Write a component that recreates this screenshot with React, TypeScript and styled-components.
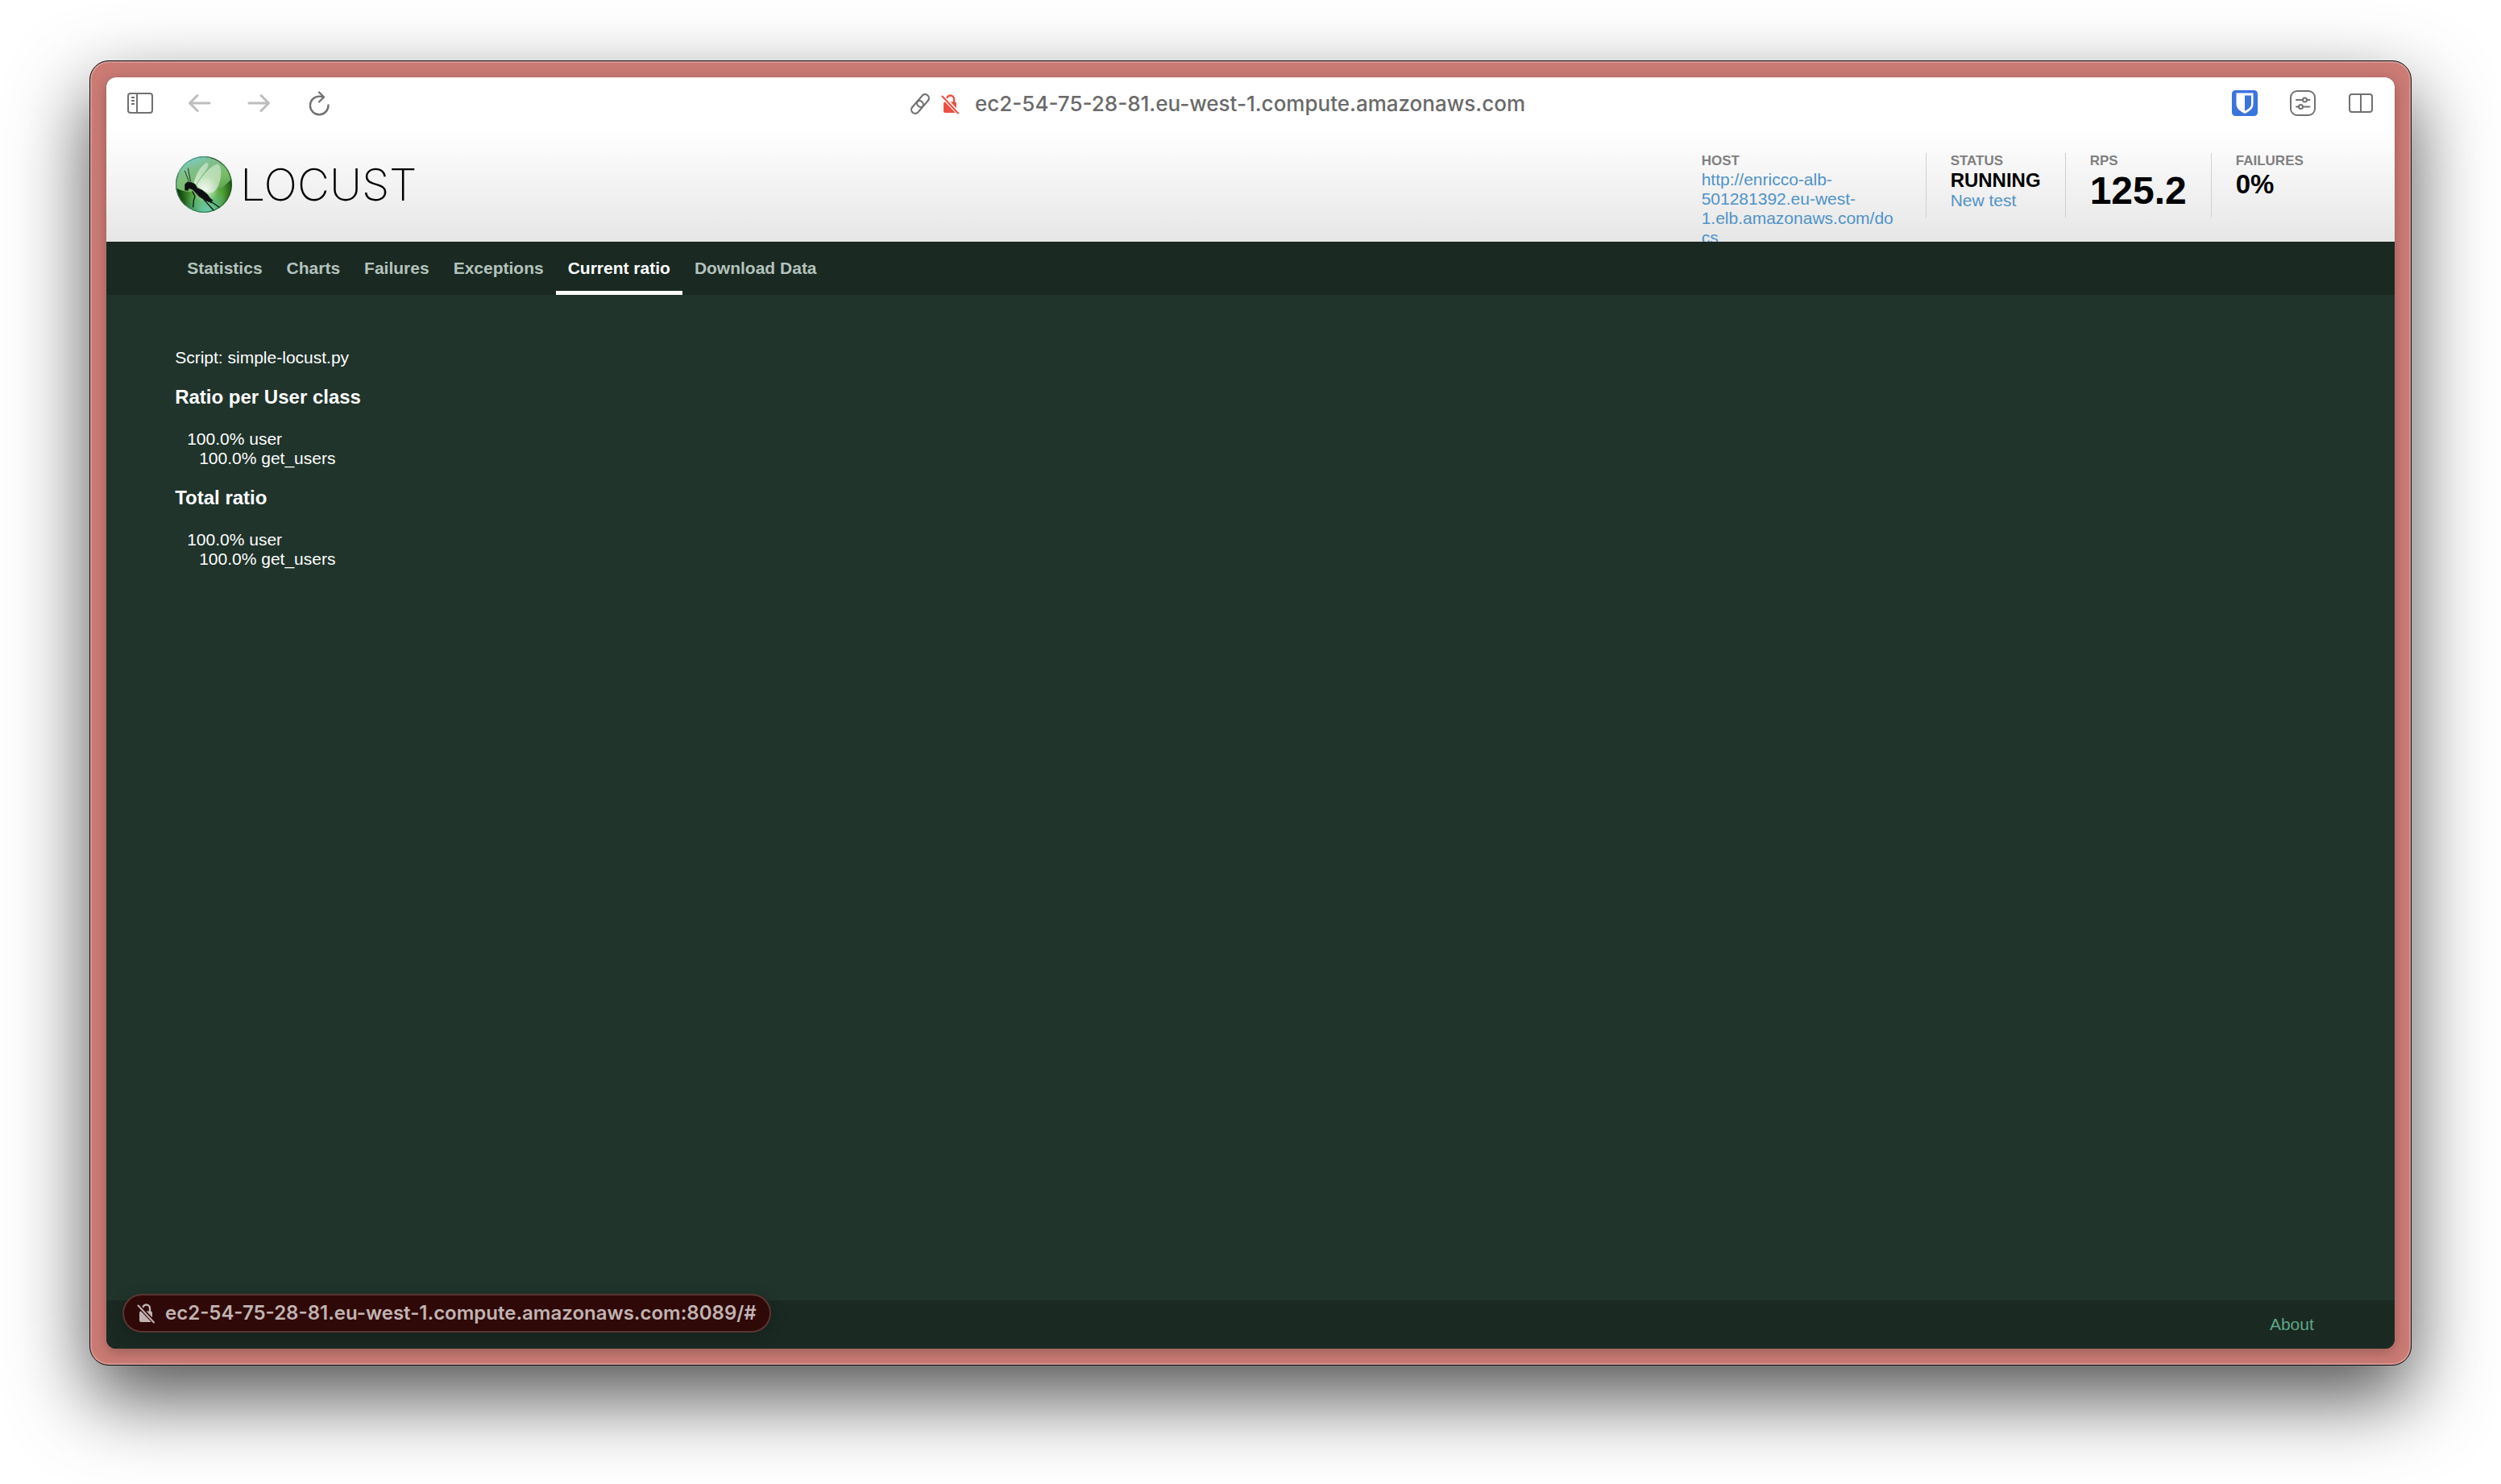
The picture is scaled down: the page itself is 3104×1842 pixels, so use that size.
import React from "react";
import styled, { createGlobalStyle, css } from "styled-components";

const color = {
  page: "#20342b",
  bar: "#1a2922",
  frame: "#cb7a74",
  icon: "#717171",
  iconDim: "#bdbdbd",
  link: "#4f93c8",
};

const GlobalStyle = createGlobalStyle`
  *, *::before, *::after { box-sizing: border-box; }
  body {
    margin: 0;
    background: #ffffff;
    font-family: "Liberation Sans", Arial, sans-serif;
    font-size: 21px;
    line-height: 24px;
  }
`;

const Desktop = styled.div`
  display: flex;
  min-height: 100vh;
  padding: 75px 111px 147px;
`;

const Frame = styled.div`
  display: flex;
  flex: 1;
  padding: 20px;
  border: 1px solid #101010;
  border-radius: 24px;
  background: ${color.frame};
  box-shadow: inset 0 0 0 2px rgba(255, 255, 255, 0.22), 0 40px 96px rgba(0, 0, 0, 0.68);
`;

const Window = styled.div`
  position: relative;
  display: flex;
  flex: 1;
  flex-direction: column;
  min-width: 0;
  border-radius: 12px;
  background: ${color.page};
  box-shadow: 0 4px 16px rgba(0, 0, 0, 0.25);
`;

const Toolbar = styled.div`
  display: flex;
  align-items: center;
  height: 64px;
  padding: 0 26px 0 25px;
  border-radius: 12px 12px 0 0;
  background: #ffffff;
`;

const ToolGroup = styled.div`
  display: flex;
  align-items: center;
  gap: 40px;
`;

const IconButton = styled.button`
  display: flex;
  padding: 0;
  border: 0;
  background: none;
  color: ${(p: { $dim?: boolean }) => (p.$dim ? color.iconDim : color.icon)};
`;

const AddressArea = styled.div`
  display: flex;
  flex: 1;
  justify-content: center;
  padding-right: 162px;
`;

const Address = styled.button`
  display: flex;
  align-items: center;
  gap: 12px;
  padding: 2px 0 0;
  border: 0;
  background: none;
  color: #6a6a6a;
  font: 500 26px/32px Inter, sans-serif;
`;

const AddressText = styled.span`
  padding-left: 8px;
`;

const inset = css`
  padding: 0 3%;
`;

const Header = styled.header`
  ${inset}
  display: flex;
  justify-content: space-between;
  height: 140px;
  background: linear-gradient(#ffffff, #e6e6e6);
`;

const Brand = styled.a`
  display: flex;
  align-items: center;
  gap: 10px;
  height: 70px;
  margin: 34px 0 0 1px;
  color: #000000;
  font: 200 55px/70px Inter, sans-serif;
  text-decoration: none;
`;

const Stats = styled.div`
  display: flex;
  align-items: flex-start;
  padding-top: 30px;
`;

const Stat = styled.div`
  height: 80px;
  padding: 0 30px;
  border-left: 1px solid #cfcfcf;

  &:first-child { border-left: 0; }
  &:last-child { padding-right: 28px; }
`;

const StatLabel = styled.div`
  padding: 1px 0 2px;
  color: #808080;
  font-size: 17px;
  font-weight: bold;
  line-height: 18px;
`;

const StatValue = styled.div<{ $size: number; $line: number }>`
  color: #000000;
  font-size: ${(p) => p.$size}px;
  font-weight: bold;
  line-height: ${(p) => p.$line}px;
`;

const StatLink = styled.a`
  display: block;
  max-width: 248px;
  color: ${color.link};
  text-decoration: none;
  overflow-wrap: anywhere;
`;

const Nav = styled.nav`
  ${inset}
  position: relative;
  display: flex;
  height: 66px;
  background: ${color.bar};
`;

const Tab = styled.a<{ $active?: boolean }>`
  padding: 21px 15px 16px;
  border-bottom: 5px solid ${(p) => (p.$active ? "#ffffff" : "transparent")};
  color: ${(p) => (p.$active ? "#ffffff" : "#b3c3bc")};
  font-weight: bold;
  text-decoration: none;
`;

const Main = styled.main`
  flex: 1;
  padding: 66px 3% 0;
  color: #ffffff;
`;

const ScriptName = styled.p`
  margin: 0;
`;

const RatioTitle = styled.h3`
  margin: 23px 0 26px;
  font-size: 24px;
  line-height: 28px;
`;

const RatioList = styled.ul`
  margin: 0;
  padding: 0 0 0 15px;
  list-style: none;
`;

const Footer = styled.footer`
  ${inset}
  display: flex;
  align-items: center;
  justify-content: flex-end;
  height: 60px;
  border-radius: 0 0 12px 12px;
  background: ${color.bar};
`;

const FooterLink = styled.a`
  padding: 0 15px;
  color: #5fa587;
  text-decoration: none;
`;

const StatusPill = styled.div`
  position: absolute;
  bottom: 20px;
  left: 20px;
  display: flex;
  align-items: center;
  gap: 13px;
  height: 48px;
  padding: 0 16px;
  border: 2px solid #5b3533;
  border-radius: 24px;
  background: #2f0907;
  box-shadow: 0 4px 20px rgba(0, 0, 0, 0.2);
  color: #c1b3b2;
  font: 600 24px/32px Inter, sans-serif;
`;

const SidebarIcon = () => (
  <svg width="34" height="28" viewBox="0 0 34 28" fill="none" stroke="currentColor" strokeWidth="2">
    <rect x="2" y="2" width="30" height="24" rx="3" />
    <path d="M13 2v24M6 7h4M6 11h4M6 15h4" />
  </svg>
);

const BackIcon = () => (
  <svg width="34" height="28" viewBox="0 0 34 28" fill="none" stroke="currentColor" strokeWidth="3" strokeLinecap="round" strokeLinejoin="round">
    <path d="M29 14H5M14 4.500L4.500 14l9.500 9.500" />
  </svg>
);

const ForwardIcon = () => (
  <svg width="34" height="28" viewBox="0 0 34 28" fill="none" stroke="currentColor" strokeWidth="3" strokeLinecap="round" strokeLinejoin="round">
    <path d="M4 14h24M19 4.500L28.500 14 19 23.500" />
  </svg>
);

const ReloadIcon = () => (
  <svg width="34" height="34" viewBox="0 0 34 34" fill="none" stroke="currentColor" strokeWidth="2.400" strokeLinecap="round" strokeLinejoin="round">
    <path d="M28.500 19.500A11.300 11.300 0 1 1 17.200 8.600c2 0 4 .2 5.400.8" />
    <path d="M17 3.500l6 6-6 6" />
  </svg>
);

const LinkIcon = () => (
  <svg width="28" height="28" viewBox="0 0 28 28" fill="none" stroke="#717171" strokeWidth="2.200">
    <rect x="8.700" y="5.250" width="17.600" height="9.500" rx="4.750" transform="rotate(-50 17.500 10)" />
    <rect x="1.700" y="13.250" width="17.600" height="9.500" rx="4.750" transform="rotate(-50 10.500 18)" />
  </svg>
);

const InsecureIcon = ({ gap, fill }: { gap: string; fill: string }) => (
  <svg width="22" height="26" viewBox="0 0 22 26" fill="none">
    <path d="M7 12V7a4.500 4.500 0 0 1 9 0V12" stroke={fill} strokeWidth="2.400" />
    <rect x="3" y="10.500" width="16" height="13.500" rx="2" fill={fill} />
    <path d="M1 2.700L22 25" stroke={gap} strokeWidth="4.800" />
    <path d="M1.500 3.500L21 24.500" stroke={fill} strokeWidth="2" strokeLinecap="round" />
  </svg>
);

const ShieldIcon = () => (
  <svg width="32" height="32" viewBox="0 0 32 32">
    <rect width="32" height="32" rx="4.500" fill="#3a74dd" />
    <path d="M5.500 3.500h21v14c0 5-5 9-10.500 11.500C10.500 26.500 5.500 22.500 5.500 17.500z" fill="#ffffff" />
    <path d="M16 6.500h8v11c0 3.500-3.500 6-8 8.200z" fill="#3a74dd" />
  </svg>
);

const SlidersIcon = () => (
  <svg width="32" height="32" viewBox="0 0 32 32" fill="none" stroke="currentColor" strokeWidth="2">
    <rect x="1" y="1" width="30" height="30" rx="8" />
    <path d="M8 12h8M21 12h3.500M8 20.500h3M16.500 20.500h8" strokeLinecap="round" />
    <circle cx="18.500" cy="12" r="2.500" />
    <circle cx="13.500" cy="20.500" r="2.500" />
  </svg>
);

const SplitIcon = () => (
  <svg width="32" height="26" viewBox="0 0 32 26" fill="none" stroke="currentColor" strokeWidth="2">
    <rect x="2" y="2" width="28" height="22" rx="3" />
    <path d="M16 2v22" />
  </svg>
);

const LocustOrb = () => (
  <svg width="70" height="70" viewBox="0 0 210 210">
    <defs>
      <clipPath id="orb"><circle cx="105" cy="105" r="105" /></clipPath>
      <linearGradient id="upper" x1="0.100" y1="0" x2="0.700" y2="1">
        <stop offset="0" stopColor="#7cd3e0" />
        <stop offset="0.350" stopColor="#80bf8c" />
        <stop offset="0.700" stopColor="#79bd68" />
        <stop offset="1" stopColor="#5ea453" />
      </linearGradient>
      <radialGradient id="lower" cx="0.560" cy="0.640" r="0.520">
        <stop offset="0" stopColor="#84c95c" />
        <stop offset="0.550" stopColor="#4c9a33" />
        <stop offset="1" stopColor="#0b3a08" />
      </radialGradient>
      <radialGradient id="pool" cx="0.550" cy="1" r="0.450">
        <stop offset="0" stopColor="#6fd0b8" />
        <stop offset="1" stopColor="#6fd0b8" stopOpacity="0" />
      </radialGradient>
      <radialGradient id="glow" cx="0.520" cy="0.580" r="0.240">
        <stop offset="0" stopColor="#ffffff" stopOpacity="0.750" />
        <stop offset="1" stopColor="#ffffff" stopOpacity="0" />
      </radialGradient>
      <linearGradient id="wing" x1="1" y1="0" x2="0.200" y2="1">
        <stop offset="0" stopColor="#ffffff" stopOpacity="0.400" />
        <stop offset="1" stopColor="#ffffff" stopOpacity="0.600" />
      </linearGradient>
      <linearGradient id="rim" x1="0" y1="0.300" x2="1" y2="0.500">
        <stop offset="0" stopColor="#4fa9a0" />
        <stop offset="0.600" stopColor="#2c6d40" />
        <stop offset="1" stopColor="#1f5a20" />
      </linearGradient>
    </defs>
    <g clipPath="url(#orb)">
      <rect width="210" height="210" fill="url(#lower)" />
      <rect width="210" height="210" fill="url(#pool)" />
      <path d="M0 0H210V82C180 118 150 132 105 134 60 136 25 132 0 118Z" fill="url(#upper)" />
      <rect width="210" height="210" fill="url(#glow)" />
      <path d="M68 100C74 70 94 34 114 24c12-2 9 12-1 28C99 72 84 88 76 104Z" fill="url(#wing)" />
      <path d="M78 108C96 76 126 38 154 29c14 0 17 26 13 52-5 28-16 52-36 55-22 0-38-14-53-28Z" fill="url(#wing)" />
      <path d="M50 95L34 54M56 95L46 44" stroke="#18351f" strokeWidth="3" fill="none" />
      <path d="M35 104L44 96 60 98 70 103 76 110 79 118 100 127 118 142 128 156 139 165 129 166 136 174 112 165 88 150 66 126 58 121 48 119 46 127 35 126Z" fill="#0d0f10" strokeLinejoin="round" stroke="#0d0f10" strokeWidth="2" />
      <path d="M62 130l10 19-5 15-2 26M104 160l40 44M126 164l40 29" stroke="#10181a" strokeWidth="4" fill="none" />
    </g>
    <circle cx="105" cy="105" r="103" fill="none" stroke="url(#rim)" strokeWidth="3" />
    <path d="M130 6A103 103 0 0 1 178 33M10 65A103 103 0 0 0 36 182" fill="none" stroke="#0c2c14" strokeWidth="2" opacity="0.600" />
  </svg>
);

const tabs = ["Statistics", "Charts", "Failures", "Exceptions", "Current ratio", "Download Data"];

const Ratio = ({ title }: { title: string }) => (
  <section>
    <RatioTitle>{title}</RatioTitle>
    <RatioList>
      <li>
        100.0% user
        <RatioList>
          <li>100.0% get_users</li>
        </RatioList>
      </li>
    </RatioList>
  </section>
);

export default function App() {
  return (
    <Desktop>
      <GlobalStyle />
      <Frame>
        <Window>
          <Toolbar>
            <ToolGroup>
              <IconButton aria-label="Show sidebar"><SidebarIcon /></IconButton>
              <IconButton aria-label="Back" $dim><BackIcon /></IconButton>
              <IconButton aria-label="Forward" $dim><ForwardIcon /></IconButton>
              <IconButton aria-label="Reload"><ReloadIcon /></IconButton>
            </ToolGroup>
            <AddressArea>
              <Address>
                <LinkIcon />
                <InsecureIcon gap="#ffffff" fill="#ec4f3f" />
                <AddressText>ec2-54-75-28-81.eu-west-1.compute.amazonaws.com</AddressText>
              </Address>
            </AddressArea>
            <ToolGroup>
              <IconButton aria-label="Password manager"><ShieldIcon /></IconButton>
              <IconButton aria-label="Page settings"><SlidersIcon /></IconButton>
              <IconButton aria-label="Split view"><SplitIcon /></IconButton>
            </ToolGroup>
          </Toolbar>

          <Header>
            <Brand href="#"><LocustOrb />LOCUST</Brand>
            <Stats>
              <Stat>
                <StatLabel>HOST</StatLabel>
                <StatLink href="#">http://enricco-alb-501281392.eu-west-1.elb.amazonaws.com/docs</StatLink>
              </Stat>
              <Stat>
                <StatLabel>STATUS</StatLabel>
                <StatValue $size={24} $line={26}>RUNNING</StatValue>
                <StatLink href="#">New test</StatLink>
              </Stat>
              <Stat>
                <StatLabel>RPS</StatLabel>
                <StatValue $size={48} $line={52}>125.2</StatValue>
              </Stat>
              <Stat>
                <StatLabel>FAILURES</StatLabel>
                <StatValue $size={33} $line={36}>0%</StatValue>
              </Stat>
            </Stats>
          </Header>

          <Nav>
            {tabs.map((tab) => (
              <Tab key={tab} href="#" $active={tab === "Current ratio"}>{tab}</Tab>
            ))}
          </Nav>

          <Main>
            <ScriptName>Script: simple-locust.py</ScriptName>
            <Ratio title="Ratio per User class" />
            <Ratio title="Total ratio" />
          </Main>

          <Footer>
            <FooterLink href="#">About</FooterLink>
          </Footer>

          <StatusPill>
            <InsecureIcon gap="#2f0907" fill="#c1b3b2" />
            <span>ec2-54-75-28-81.eu-west-1.compute.amazonaws.com:8089/#</span>
          </StatusPill>
        </Window>
      </Frame>
    </Desktop>
  );
}
